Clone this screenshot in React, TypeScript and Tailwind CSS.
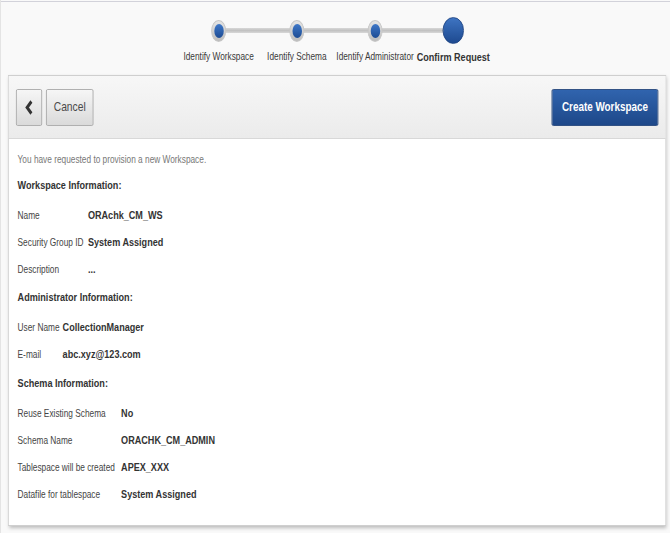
import React from "react";

// the source screenshot is squeezed horizontally, so the page is laid out
// at its natural width and narrowed with scale-x at the root

const steps = [
  { label: "Identify Workspace", done: true },
  { label: "Identify Schema", done: true },
  { label: "Identify Administrator", done: true },
  { label: "Confirm Request", done: false },
];

type Row = { label: string; value: string };

const workspaceRows: Row[] = [
  { label: "Name", value: "ORAchk_CM_WS" },
  { label: "Security Group ID", value: "System Assigned" },
  { label: "Description", value: "..." },
];

const adminRows: Row[] = [
  { label: "User Name", value: "CollectionManager" },
  { label: "E-mail", value: "abc.xyz@123.com" },
];

const schemaRows: Row[] = [
  { label: "Reuse Existing Schema", value: "No" },
  { label: "Schema Name", value: "ORACHK_CM_ADMIN" },
  { label: "Tablespace will be created", value: "APEX_XXX" },
  { label: "Datafile for tablespace", value: "System Assigned" },
];

function Section({ title, rows, labelW }: { title: string; rows: Row[]; labelW: string }) {
  return (
    <div>
      <div className="h-[27px] mb-[3px] flex items-center text-[11.5px] font-bold text-[#333]">{title}</div>
      {rows.map((r) => (
        <div key={r.label} className="h-[27px] flex items-center">
          <span className={`${labelW} shrink-0 text-[10.5px] text-[#444] whitespace-nowrap`}>{r.label}</span>
          <span className="text-[11.5px] font-bold text-[#333] whitespace-nowrap">{r.value}</span>
        </div>
      ))}
    </div>
  );
}

function Wizard() {
  return (
    <div className="h-[74px] mt-px border-t border-[#d2d2da] flex justify-center">
      <div className="relative flex pt-[11px]">
        <div className="absolute left-[49px] right-[49px] top-[26px] h-[5px] rounded-full bg-gradient-to-b from-[#d8d8d8] via-[#c2c2c2] to-[#d8d8d8]" />
        {steps.map((s) => (
          <div key={s.label} className="relative w-[99px] flex flex-col items-center">
            <div className="h-[35px] flex items-center justify-center">
              {s.done ? (
                <div className="w-[19px] h-[22px] rounded-[50%] bg-gradient-to-b from-[#e6e6e6] to-[#bcbcbc] border border-[#c6c6c6] flex items-center justify-center">
                  <div className="w-[12px] h-[14px] rounded-[50%] bg-gradient-to-b from-[#3f78c8] to-[#1d4c94]" />
                </div>
              ) : (
                <div className="w-[27px] h-[27px] rounded-full bg-gradient-to-b from-[#3e74c2] to-[#1e4a90] border border-[#1c4282]" />
              )}
            </div>
            <div
              className={`mt-px whitespace-nowrap ${
                s.done ? "text-[10.5px] text-[#3a3a3a]" : "text-[11.5px] font-bold text-[#333]"
              }`}
            >
              {s.label}
            </div>
          </div>
        ))}
      </div>
    </div>
  );
}

export default function App() {
  return (
    <div className="w-[670px] h-[533px] bg-[#f9f9f9] border-l border-[#e4e4e4] overflow-hidden">
      <div
        className="w-[848px] h-[533px] origin-top-left scale-x-[0.79]"
        style={{ fontFamily: '"Liberation Sans", Arial, sans-serif' }}
      >
        <Wizard />
        <div className="ml-[9px] w-[833px] h-[451px] bg-white border border-[#cfcfcf] shadow-[1px_2px_4px_rgba(0,0,0,0.25)]">
          <div className="h-[63px] px-[9px] flex items-center justify-between border-b border-[#d8d8d8] bg-gradient-to-b from-[#f7f7f7] to-[#ebebeb]">
            <div className="flex gap-[5px]">
              <button className="w-[33px] h-[37px] rounded-[2px] border border-[#a8a8a8] bg-gradient-to-b from-[#f6f6f6] to-[#dadada] flex items-center justify-center">
                <svg width="11" height="15" viewBox="0 0 11 15">
                  <path d="M8.5 1.5 L3 7.5 L8.5 13.5" fill="none" stroke="#333" strokeWidth="3.4" />
                </svg>
              </button>
              <button className="w-[60px] h-[37px] rounded-[2px] border border-[#a8a8a8] bg-gradient-to-b from-[#f6f6f6] to-[#dadada] text-[13px] text-[#4a4a4a]">
                Cancel
              </button>
            </div>
            <button className="w-[135px] h-[37px] rounded-[2px] border border-[#1b3f78] bg-gradient-to-b from-[#3064ae] to-[#1e4889] text-white text-[12.5px] font-bold whitespace-nowrap">
              Create Workspace
            </button>
          </div>
          <div className="pl-[11px] pt-[9px]">
            <div className="h-[24px] flex items-center text-[10.5px] text-[#777]">
              You have requested to provision a new Workspace.
            </div>
            <Section title="Workspace Information:" rows={workspaceRows} labelW="w-[89px]" />
            <div className="mt-px">
              <Section title="Administrator Information:" rows={adminRows} labelW="w-[57px]" />
            </div>
            <div className="mt-[2px]">
              <Section title="Schema Information:" rows={schemaRows} labelW="w-[131px]" />
            </div>
          </div>
        </div>
      </div>
    </div>
  );
}
